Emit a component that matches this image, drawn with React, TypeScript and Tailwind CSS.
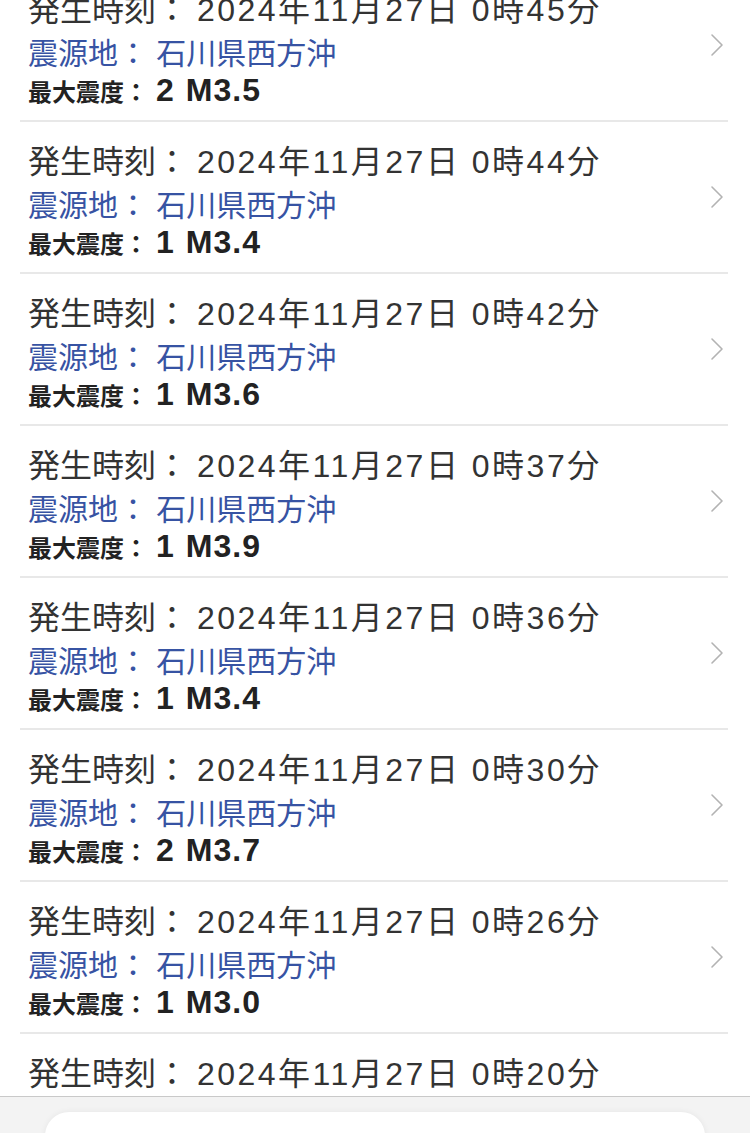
import React from 'react';

interface Quake {
  time: string;
  place: string;
  intensity: string;
  magnitude: string;
}

const quakes: Quake[] = [
  { time: '2024年11月27日 0時45分', place: '石川県西方沖', intensity: '2', magnitude: 'M3.5' },
  { time: '2024年11月27日 0時44分', place: '石川県西方沖', intensity: '1', magnitude: 'M3.4' },
  { time: '2024年11月27日 0時42分', place: '石川県西方沖', intensity: '1', magnitude: 'M3.6' },
  { time: '2024年11月27日 0時37分', place: '石川県西方沖', intensity: '1', magnitude: 'M3.9' },
  { time: '2024年11月27日 0時36分', place: '石川県西方沖', intensity: '1', magnitude: 'M3.4' },
  { time: '2024年11月27日 0時30分', place: '石川県西方沖', intensity: '2', magnitude: 'M3.7' },
  { time: '2024年11月27日 0時26分', place: '石川県西方沖', intensity: '1', magnitude: 'M3.0' },
  { time: '2024年11月27日 0時20分', place: '石川県西方沖', intensity: '1', magnitude: 'M3.2' },
];

const ChevronRight = () => (
  <svg width="14" height="24" viewBox="0 0 14 24" fill="none">
    <path d="M2 2 L12 12 L2 22" stroke="#b3b3b3" strokeWidth="1.6" strokeLinecap="round" strokeLinejoin="round" />
  </svg>
);

function QuakeRow({ quake }: { quake: Quake }) {
  return (
    <div className="mx-[20px] mr-[22px] border-t-2 border-[#e8e8e8]">
      <div className="flex items-center justify-between h-[150px] pl-[8px] pr-[4px]">
        <div className="flex flex-col pt-[1px]">
          {/* 発生時刻 */}
          <div className="text-[32px] leading-[44px] text-[#333333] whitespace-nowrap">
            発生時刻：&nbsp;<span className="tracking-[2.5px]">{quake.time}</span>
          </div>
          {/* 震源地 */}
          <div className="text-[30px] leading-[44px] text-[#3753a3] whitespace-nowrap">
            震源地：&nbsp;{quake.place}
          </div>
          {/* 最大震度 */}
          <div className="flex items-baseline h-[28px] text-[#222222] font-bold whitespace-nowrap">
            <span className="text-[24px] leading-[28px]">最大震度：</span>
            <span className="text-[32px] leading-[28px] ml-[8px]">{quake.intensity}</span>
            <span className="text-[32px] leading-[28px] ml-[12px] tracking-[1px]">{quake.magnitude}</span>
          </div>
        </div>
        <ChevronRight />
      </div>
    </div>
  );
}

export default function App() {
  return (
    <div
      className="relative w-[750px] h-[1133px] overflow-hidden bg-white"
      style={{ fontFamily: '"Liberation Sans", "Noto Sans CJK JP", sans-serif' }}
    >
      <div className="-mt-[32px]">
        {quakes.map((q, i) => (
          <QuakeRow key={i} quake={q} />
        ))}
      </div>

      {/* Bottom bar */}
      <div className="absolute left-0 right-0 top-[1096px] bottom-0 bg-[#f3f3f3] border-t border-[#c9c9c9]">
        <div className="mx-[45px] mt-[15px] h-[60px] rounded-[24px] bg-white shadow-[0_0_6px_rgba(0,0,0,0.06)]" />
      </div>
    </div>
  );
}
